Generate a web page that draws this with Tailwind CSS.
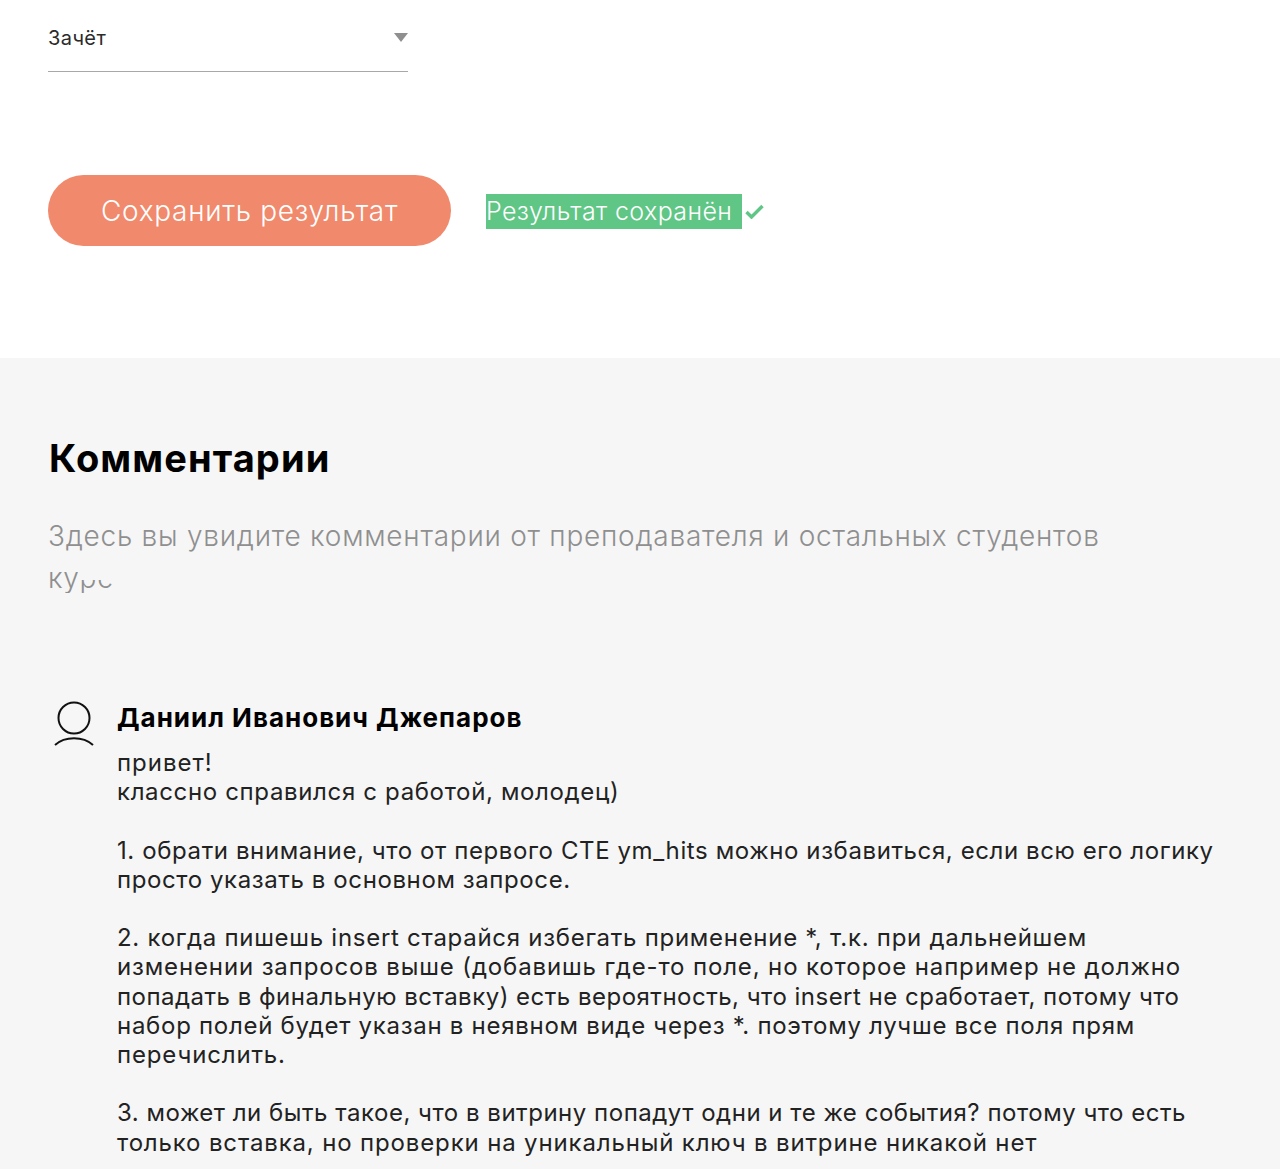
<!DOCTYPE html>
<html lang="ru">

<head>
  <meta charset="UTF-8">
  <title>Комментарии</title>
  <script src="https://cdn.jsdelivr.net/npm/@tailwindcss/browser@4"></script>
</head>

<body class="bg-white font-['Inter',sans-serif] h-[1169px] overflow-hidden">
  <!-- Result form -->
  <div class="h-[358px] px-12 pt-[22px]">
    <div class="w-[360px] h-[50px] border-b border-[#a8a8a8] flex justify-between items-start pt-[2px]">
      <span class="text-[20px] leading-[28px] tracking-[0.4px] text-[#2b2b2b]">Зачёт</span>
      <svg class="mt-[9px]" width="14" height="9" viewBox="0 0 14 9"><path d="M0 0H14L7 9Z" fill="#8f8f8f" /></svg>
    </div>
    <div class="flex items-center mt-[103px]">
      <button class="w-[403px] h-[71px] rounded-[36px] bg-[#f1896c] text-white text-[28px] font-light tracking-[0.7px]">Сохранить результат</button>
      <div class="ml-[35px] flex items-center mt-[2px]">
        <span class="w-[256px] h-[35px] bg-[#5fc685] text-white text-[25px] font-light leading-[35px] whitespace-nowrap tracking-[0.4px]">Результат сохранён</span>
        <svg class="ml-[3px]" width="19" height="15" viewBox="0 0 19 15" fill="none"><path d="M1.5 8L6.5 13L17.5 2" stroke="#5fc685" stroke-width="3.4" /></svg>
      </div>
    </div>
  </div>

  <!-- Comments -->
  <div class="h-[811px] bg-[#f6f6f6] px-12 pt-[75px] overflow-hidden">
    <h2 class="text-[38px] leading-[50px] font-bold text-black ml-[1px] tracking-[1.1px]">Комментарии</h2>
    <div class="mt-[32px] h-[78px] overflow-hidden text-[28px] leading-[42px] font-light text-[#8f8f8f] tracking-[0.75px] relative">
      Здесь вы увидите комментарии от преподавателя и остальных студентов<br>курса
      <!-- the second line is half covered in the original -->
      <div class="absolute left-[33px] right-0 top-[50px] h-[15px] bg-[#f6f6f6]"></div>
      <div class="absolute left-[65px] right-0 top-[50px] h-[28px] bg-[#f6f6f6]"></div>
    </div>

    <div class="flex mt-[103px]">
      <svg class="ml-[5px] mt-[5px] shrink-0" width="42" height="48" viewBox="0 0 42 48" fill="none" stroke="#111" stroke-width="2">
        <circle cx="21" cy="17" r="15.5" />
        <path d="M2 44C12 35 30 35 40 44" />
      </svg>
      <div class="ml-[22px] text-[#222]">
        <div class="text-[26px] leading-[34px] font-bold text-black h-[44px] flex items-center whitespace-nowrap tracking-[1px]">Даниил Иванович Джепаров</div>
        <div class="mt-[8px] text-[24px] leading-[29.2px] whitespace-nowrap tracking-[0.6px]">
          <p class="tracking-[1px]">привет!</p>
          <p class="tracking-[0.65px] mb-[29.2px]">классно справился с работой, молодец)</p>
          <p>1. обрати внимание, что от первого СТЕ ym_hits можно избавиться, если всю его логику</p>
          <p class="mb-[29.2px]">просто указать в основном запросе.</p>
          <p class="tracking-[0.72px]">2. когда пишешь insert старайся избегать применение *, т.к. при дальнейшем</p>
          <p class="tracking-[0.86px]">изменении запросов выше (добавишь где-то поле, но которое например не должно</p>
          <p class="tracking-[0.49px]">попадать в финальную вставку) есть вероятность, что insert не сработает, потому что</p>
          <p class="tracking-[0.72px]">набор полей будет указан в неявном виде через *. поэтому лучше все поля прям</p>
          <p class="tracking-[0.85px] mb-[29.2px]">перечислить.</p>
          <p class="tracking-[0.52px]">3. может ли быть такое, что в витрину попадут одни и те же события? потому что есть</p>
          <p class="tracking-[0.85px]">только вставка, но проверки на уникальный ключ в витрине никакой нет</p>
        </div>
      </div>
    </div>
  </div>
</body>

</html>
